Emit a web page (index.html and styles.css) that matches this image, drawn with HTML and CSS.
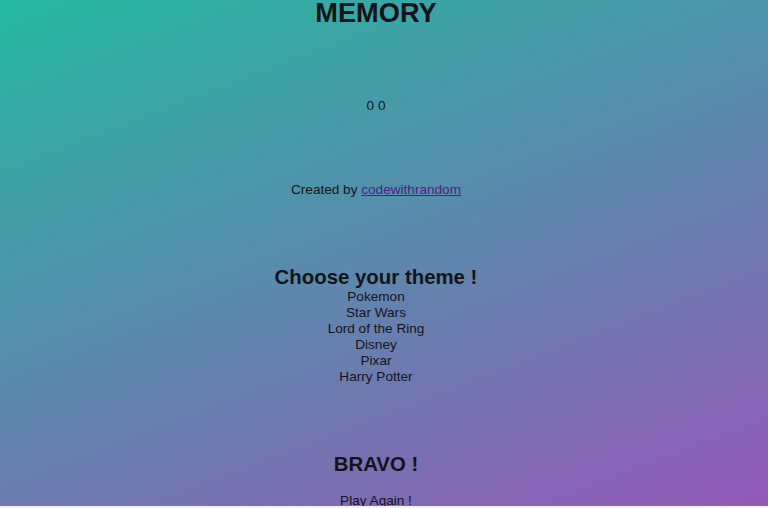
FILE: index.html
```html
<!DOCTYPE html>
<html>
<head>
<meta charset="utf-8">
<title>Memory</title>
<link rel="stylesheet" href="styles.css">
</head>
<body>
<main class="page">
  <h1 class="title">MEMORY</h1>
  <div class="score">0 0</div>
  <p class="credit">Created by <a class="credit-link" href="#">codewithrandom</a></p>
  <h2 class="heading theme-heading">Choose your theme !</h2>
  <ul class="themes">
    <li class="theme">Pokemon</li>
    <li class="theme">Star Wars</li>
    <li class="theme">Lord of the Ring</li>
    <li class="theme">Disney</li>
    <li class="theme">Pixar</li>
    <li class="theme">Harry Potter</li>
  </ul>
  <h2 class="heading bravo">BRAVO !</h2>
  <div class="again">Play Again !</div>
</main>
</body>
</html>
```
FILE: styles.css
```css
html {
  margin: 0;
  padding: 0;
  background: #f4f2f8;
  height: 508px;
  overflow: hidden;
}
body {
  margin: 0;
  height: 506px;
  background: linear-gradient(159deg, #24b8a0 0%, #9459b8 100%);
  font-family: "Liberation Sans", Arial, sans-serif;
  color: #141418;
  font-size: 13.6px;
}
.page {
  display: flex;
  flex-direction: column;
  align-items: center;
  text-align: center;
  padding-right: 16px;
}
.title {
  margin: 0;
  font-size: 27.2px;
  line-height: 26px;
  font-weight: bold;
}
.score {
  margin-top: 72px;
  line-height: 16px;
}
.credit {
  margin: 68px 0 0;
  line-height: 16px;
}
.credit-link {
  color: #551a8b;
}
.heading {
  margin: 0;
  font-size: 20.4px;
  line-height: 23px;
  font-weight: bold;
}
.theme-heading {
  margin-top: 68px;
}
.themes {
  list-style: none;
  margin: 0;
  padding: 0;
}
.theme {
  line-height: 16px;
}
.bravo {
  margin-top: 68px;
}
.again {
  margin-top: 17px;
  line-height: 16px;
}
```
